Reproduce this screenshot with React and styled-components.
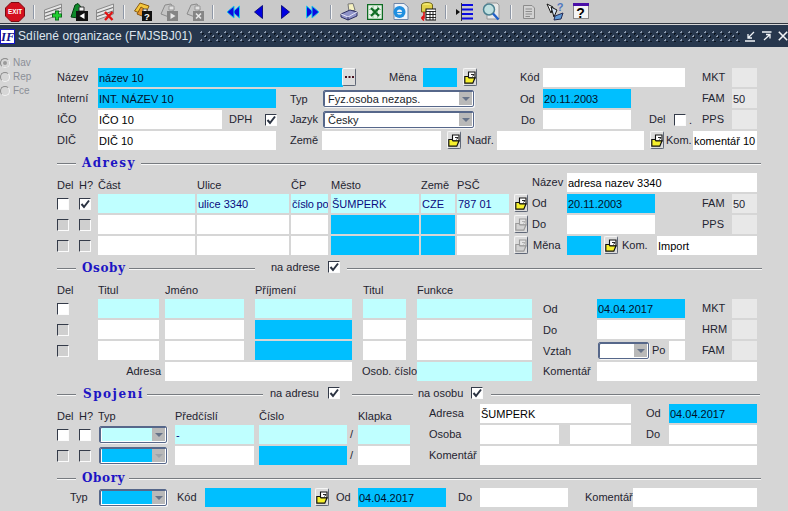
import React from 'react';
import styled, { createGlobalStyle } from 'styled-components';

const GlobalStyle = createGlobalStyle`
  html, body { margin: 0; padding: 0; background: #d6d6d6; overflow: hidden; }
  body { font-family: "Liberation Sans", Arial, sans-serif; font-size: 11px; color: #1a1e2a; }
`;

const Page = styled.div`
  width: 788px;
  height: 511px;
  display: flex;
  flex-direction: column;
  overflow: hidden;
`;

/* toolbar */
const Toolbar = styled.div`
  height: 23px;
  display: flex;
  align-items: center;
  background: #c9c9c9;
  border-bottom: 1px solid #30363f;
  flex-shrink: 0;
`;

const Tool = styled.span`
  display: flex;
  flex-shrink: 0;
  margin-left: ${p => p.$ml || 0}px;
`;

const Sep = styled.span`
  width: 1px;
  height: 14px;
  flex-shrink: 0;
  margin-left: ${p => p.$ml || 0}px;
  background: #8e97a6;
  border-right: 1px solid #f4f4f4;
`;

/* window title */
const TitleBar = styled.div`
  height: 22px;
  margin-top: 1px;
  display: flex;
  align-items: center;
  background: #27374d;
  flex-shrink: 0;
`;

const Logo = styled.span`
  width: 15px;
  height: 15px;
  box-sizing: border-box;
  flex-shrink: 0;
  background: #fff;
  border: 1px solid #1414c8;
  color: #12128c;
  font: italic bold 13px/13px "Liberation Serif", serif;
  text-align: center;
`;

const TitleText = styled.span`
  margin-left: 3px;
  width: 182px;
  flex-shrink: 0;
  color: #dde5ee;
  font-size: 12px;
  letter-spacing: 0.05px;
  white-space: nowrap;
`;

const Dots = styled.span`
  width: 540px;
  height: 11px;
  flex-shrink: 0;
  background-image:
    radial-gradient(circle at 1.5px 1.5px, #8f9db0 1px, transparent 1px),
    radial-gradient(circle at 2.5px 2.5px, #0d1520 1px, transparent 1px),
    radial-gradient(circle at 5.5px 5.5px, #8f9db0 1px, transparent 1px),
    radial-gradient(circle at 6.5px 6.5px, #0d1520 1px, transparent 1px);
  background-size: 8px 8px;
`;

const WindowBtn = styled.span`
  display: flex;
  flex-shrink: 0;
  margin-left: ${p => p.$ml || 0}px;
`;

/* canvas */
const Canvas = styled.div`
  flex: 1;
  display: flex;
`;

const Side = styled.div`
  width: 57px;
  flex-shrink: 0;
  padding-top: 9px;
  display: flex;
  flex-direction: column;
  gap: 1px;
`;

const RadioRow = styled.div`
  height: 13px;
  display: flex;
  align-items: center;
  gap: 3px;
  color: #8b8f96;
  font-size: 10px;
`;

const RadioDot = styled.span`
  width: 10px;
  height: 10px;
  box-sizing: border-box;
  border-radius: 50%;
  border: 1px solid;
  border-color: #8d8d8d #f2f2f2 #f2f2f2 #8d8d8d;
  background: ${p => (p.$on ? '#9a9a9a' : 'transparent')};
  box-shadow: ${p => (p.$on ? 'inset 0 0 0 2px #d6d6d6' : 'none')};
`;

const Main = styled.div`
  width: 705px;
  padding-top: 21px;
`;

const Row = styled.div`
  height: 19px;
  margin-bottom: 2px;
  display: flex;
`;

const Label = styled.span`
  flex-shrink: 0;
  width: ${p => p.$w}px;
  margin-left: ${p => p.$ml || 0}px;
  padding-right: ${p => p.$pr || 0}px;
  box-sizing: border-box;
  text-align: ${p => (p.$pr ? 'right' : 'left')};
  line-height: 13px;
  align-self: ${p => (p.$low ? 'flex-end' : 'center')};
  margin-top: ${p => (p.$dy ? p.$dy * 2 : 0)}px;
  color: #1f2430;
  white-space: nowrap;
`;

const fieldColors = {
  white: ['#ffffff', '#000000'],
  blue: ['#00bfff', '#00102a'],
  cyan: ['#bfffff', '#0a0a80'],
  ro: ['#e8e8e8', '#1f2430'],
};

const Field = styled.span`
  flex-shrink: 0;
  width: ${p => p.$w}px;
  margin-left: ${p => p.$ml || 0}px;
  box-sizing: border-box;
  padding: 1px 0 0 1px;
  overflow: hidden;
  line-height: 18px;
  letter-spacing: ${p => (p.$tight ? '-0.2px' : 'normal')};
  white-space: nowrap;
  background: ${p => fieldColors[p.$kind || 'white'][0]};
  color: ${p => fieldColors[p.$kind || 'white'][1]};
`;

const CheckBox = styled.span`
  flex-shrink: 0;
  width: 12px;
  height: 12px;
  box-sizing: border-box;
  margin-left: ${p => p.$ml || 0}px;
  align-self: center;
  display: flex;
  border: 1px solid;
  border-color: #343b49 #fbfbfb #fbfbfb #343b49;
  background: ${p => (p.$off ? '#cfcfcf' : '#ffffff')};
`;

const SelectBox = styled.span`
  flex-shrink: 0;
  width: ${p => p.$w}px;
  margin: 1px 0 1px ${p => p.$ml || 0}px;
  box-sizing: border-box;
  display: flex;
  border: 1px solid #56678a;
  border-radius: 2px;
  box-shadow: inset 1px 1px 0 #56678a, 1px 1px 0 #f6f6f6;
  padding: 1px 1px 1px 2px;
  background: #ffffff;
`;

const SelectValue = styled.span`
  flex: 1;
  min-width: 0;
  padding-left: 2px;
  overflow: hidden;
  line-height: 15px;
  white-space: nowrap;
  background: ${p => fieldColors[p.$kind || 'white'][0]};
`;

const SelectArrow = styled.span`
  width: 13px;
  flex-shrink: 0;
  display: flex;
  align-items: center;
  justify-content: center;
  background: #b9b9b9;
  &::after {
    content: '';
    border-left: 4px solid transparent;
    border-right: 4px solid transparent;
    border-top: 4px solid ${p => (p.$off ? '#9ea3aa' : '#667389')};
  }
`;

const IconButton = styled.span`
  flex-shrink: 0;
  width: 14px;
  height: 18px;
  box-sizing: border-box;
  margin-left: ${p => p.$ml || 0}px;
  align-self: flex-start;
  display: flex;
  align-items: center;
  justify-content: center;
  border: 1px solid;
  border-color: #f5f5f5 #5f6777 #5f6777 #f5f5f5;
  border-radius: 2px;
  background: #dcdcdc;
`;

const Divider = styled.div`
  height: 14px;
  margin: 6px 0 3px;
  display: flex;
  align-items: center;
`;

const Rule = styled.span`
  height: 1px;
  flex: ${p => (p.$w ? `0 0 ${p.$w}px` : 1)};
  margin-left: ${p => p.$ml || 0}px;
  margin-right: ${p => p.$mr || 0}px;
  background: #777b80;
  box-shadow: 0 1px 0 #f8f8f8;
`;

const SectionTitle = styled.span`
  width: ${p => p.$w}px;
  margin-left: ${p => p.$ml || 6}px;
  flex-shrink: 0;
  font: bold 12px/14px "DejaVu Serif", "Liberation Serif", serif;
  letter-spacing: ${p => p.$ls}px;
  color: #1d14c4;
  white-space: nowrap;
`;

const DividerOption = styled.span`
  flex-shrink: 0;
  display: flex;
  align-items: center;
  height: 13px;
  align-self: flex-start;
  margin: -1px 0 0 ${p => p.$ml || 0}px;
`;

const OptionText = styled.span`
  width: ${p => p.$w}px;
  color: #1f2430;
  white-space: nowrap;
`;

/* drawings */
const CheckMark = () => (
  <svg width="10" height="10" viewBox="0 0 10 10">
    <path d="M1.5 5 L4 8 L9 1.5" fill="none" stroke="#2b3342" strokeWidth="2" />
  </svg>
);

const Check = ({ on, off, ml }) => (
  <CheckBox $off={off} $ml={ml}>{on && <CheckMark />}</CheckBox>
);

const FolderIcon = ({ off }) => (
  <svg width="12" height="13" viewBox="0 0 12 13">
    <path d="M4.5 1 H11 V7 H4.5 Z" fill={off ? '#e4e4e4' : '#fff'} stroke={off ? '#9a9a9a' : '#111'} strokeWidth="1.1" />
    <path d="M7 3.5 H10 L8.5 5.5" fill="none" stroke={off ? '#aaa' : '#111'} strokeWidth="0.9" />
    <path d="M.8 5.5 H4 L5 6.8 H11 L8.8 12.2 H.8 Z" fill={off ? '#d2d2d2' : '#f6f02c'} stroke={off ? '#9a9a9a' : '#111'} strokeWidth="1.2" />
  </svg>
);

const Folder = ({ off, ml }) => (
  <IconButton $ml={ml}><FolderIcon off={off} /></IconButton>
);

const Select = ({ w, ml, kind, value, off }) => (
  <SelectBox $w={w} $ml={ml}>
    <SelectValue $kind={kind}>{value}</SelectValue>
    <SelectArrow $off={off} />
  </SelectBox>
);

const ExitIcon = () => (
  <svg width="20" height="20" viewBox="0 0 20 20">
    <path d="M6 .5 H14 L19.5 6 V14 L14 19.5 H6 L.5 14 V6 Z" fill="#d4101e" stroke="#7b0a12" />
    <text x="10" y="12.3" textAnchor="middle" fontFamily="Liberation Sans" fontWeight="bold" fontSize="6.4" fill="#fff">EXIT</text>
  </svg>
);

const TableBase = () => (
  <g>
    <path d="M.5 7 L17.5 1 V11 L.5 17 Z" fill="#e6e6e6" stroke="#8a8a8a" />
    <path d="M1 10 L17 4.5 M1 13.5 L17 8" stroke="#6f6f6f" strokeWidth="1.2" />
  </g>
);

const AddIcon = () => (
  <svg width="18" height="18" viewBox="0 0 18 18">
    <TableBase />
    <path d="M13 7.5 V17.5 M8 12.5 H18" stroke="#0c6a1c" strokeWidth="4" />
    <path d="M13 8.5 V16.5 M9 12.5 H17" stroke="#20d030" strokeWidth="2.4" />
  </svg>
);

const DelIcon = () => (
  <svg width="18" height="18" viewBox="0 0 18 18">
    <TableBase />
    <path d="M9 9 L16.5 17 M16.5 9 L9 17" stroke="#e01414" strokeWidth="2.4" />
  </svg>
);

const GreenDocIcon = () => (
  <svg width="18" height="18" viewBox="0 0 18 18">
    <path d="M1 14 L5 2 L8 .5 L11 4 L9 8 L8 15 Z" fill="#0e8a2a" stroke="#053d12" />
    <path d="M9 4 H14 V8 H9 Z" fill="#f0f0f0" stroke="#333" />
    <rect x="6" y="8" width="12" height="10" fill="#111" />
    <path d="M14.5 10 V16 L9.5 13 Z" fill="#fff" />
  </svg>
);

const QueryIcon = () => (
  <svg width="18" height="19" viewBox="0 0 18 19">
    <path d="M0.5 9 L6 1 L15 4 L11 13 Z" fill="#f3c63c" stroke="#8a5a10" />
    <path d="M3 12 L7 5 L10 7 L8 14 Z" fill="#e8932a" stroke="#8a5a10" />
    <path d="M9 7 H13 V10 H9 Z" fill="#eee" stroke="#555" />
    <rect x="8" y="9" width="10" height="10" fill="#111" />
    <text x="13" y="17.5" textAnchor="middle" fontFamily="Liberation Sans" fontWeight="bold" fontSize="9.5" fill="#fff">?</text>
  </svg>
);

const GreyPanelIcon = ({ mark }) => (
  <svg width="18" height="18" viewBox="0 0 18 18">
    <path d="M1 11 L5 2 L11 1 L14 6 L9 14 Z" fill="#c4c4c4" stroke="#8b8b8b" />
    <path d="M9 3 H14 V7 H9 Z" fill="#e2e2e2" stroke="#999" />
    <rect x="7" y="8" width="11" height="10" fill="#858585" />
    {mark === 'play'
      ? <path d="M10.5 10 V16 L15.5 13 Z" fill="#e8e8e8" />
      : <path d="M10 10.5 L15 15.5 M15 10.5 L10 15.5" stroke="#e8e8e8" strokeWidth="1.6" />}
  </svg>
);

const NavIcon = ({ dir, twin }) => (
  <svg width={twin ? 14 : 9} height="14" viewBox={twin ? '0 0 14 14' : '0 0 9 14'} style={{ transform: dir === 'right' ? 'scaleX(-1)' : 'none' }}>
    {twin && <path d="M13.5 1 V13 L6.5 7 Z" fill="#0a0ae0" stroke="#19c8e8" strokeWidth="1" />}
    {twin
      ? <path d="M8 1 V13 L1 7 Z" fill="#0a0ae0" stroke="#19c8e8" strokeWidth="1" />
      : <path d="M8.5 .5 V13.5 L.5 7 Z" fill="#0000e0" stroke="#00006a" strokeWidth=".8" />}
  </svg>
);

const PrinterIcon = () => (
  <svg width="18" height="18" viewBox="0 0 18 18">
    <path d="M8 1 L13 .5 L15 7 L9 9 Z" fill="#f6f2c0" stroke="#777" />
    <path d="M1 11 L10 7 L17 9 V13 L8 17 L1 14 Z" fill="#8f93c8" stroke="#2c2f63" />
    <path d="M1 11 L8 14 L17 9" fill="none" stroke="#e6e6f4" />
    <path d="M8 14 V17" stroke="#2c2f63" />
  </svg>
);

const ExcelIcon = () => (
  <svg width="16" height="16" viewBox="0 0 16 16">
    <rect x=".5" y=".5" width="15" height="15" fill="#e7f3e7" stroke="#0d6b22" strokeWidth="1.5" />
    <path d="M2 5.5 H14 M2 10.5 H14 M6 2 V14 M10.5 2 V14" stroke="#7fbb8c" strokeWidth=".8" />
    <path d="M4 4 L12 12 M12 4 L4 12" stroke="#0d6b22" strokeWidth="2" />
  </svg>
);

const WebDocIcon = () => (
  <svg width="17" height="17" viewBox="0 0 17 17">
    <path d="M2 .5 H12 L16 4 V16.5 H2 Z" fill="#eef4fb" stroke="#6f86a8" />
    <circle cx="7.5" cy="9" r="6" fill="#1f8fe0" />
    <circle cx="7.5" cy="9" r="2.6" fill="#eef4fb" />
    <path d="M4 9.5 H13" stroke="#1f8fe0" strokeWidth="1.2" />
  </svg>
);

const DbCalendarIcon = () => (
  <svg width="16" height="19" viewBox="0 0 16 19">
    <ellipse cx="7" cy="3" rx="5.5" ry="2.5" fill="#f2e86a" stroke="#70661a" />
    <path d="M1.5 3 V10 H12.5 V3" fill="#e2d24a" stroke="#70661a" />
    <rect x="6" y="7" width="10" height="11" fill="#fff" stroke="#111" />
    <path d="M6 9.5 H16 M6 12.5 H16 M6 15.5 H16 M10 9.5 V18 M13 9.5 V18" stroke="#111" strokeWidth=".9" />
    <path d="M4 10 V16 H1.5 M1.5 16 L4 13.5 M1.5 16 L4 18.5" fill="none" stroke="#e01414" strokeWidth="1.6" />
  </svg>
);

const ListIcon = () => (
  <svg width="17" height="18" viewBox="0 0 17 18">
    <path d="M0 6 L4 9 L0 12 Z" fill="#111" />
    <path d="M5.5 0 V18" stroke="#333" />
    <path d="M6 2 H17 M6 6.5 H17 M6 11 H17 M6 15.5 H17" stroke="#0a0ae0" strokeWidth="1.8" />
  </svg>
);

const SearchIcon = () => (
  <svg width="18" height="19" viewBox="0 0 18 19">
    <path d="M5 1 H15 L17 3 V17 H5 Z" fill="#e8e8e8" stroke="#9a9a9a" />
    <circle cx="7" cy="7.5" r="5.5" fill="#bfe0e0" stroke="#4a7f8f" strokeWidth="1.5" />
    <path d="M11 11.5 L16.5 17.5" stroke="#1f5fc8" strokeWidth="2.4" />
  </svg>
);

const PageIcon = () => (
  <svg width="12" height="14" viewBox="0 0 12 14">
    <path d="M.5 .5 H9 L11.5 3 V13.5 H.5 Z" fill="#d2d2d2" stroke="#8c8c8c" />
    <path d="M2.5 4 H9 M2.5 6.5 H9 M2.5 9 H9 M2.5 11.5 H7" stroke="#8c8c8c" />
  </svg>
);

const HelpArrowsIcon = () => (
  <svg width="19" height="19" viewBox="0 0 19 19">
    <path d="M1 2 L7 5 L5 11 Z" fill="#fff" stroke="#111" />
    <path d="M5 5 L11 8 L8 15 Z" fill="#cfe0f4" stroke="#111" />
    <path d="M9 14 L17 11 L15 17 L8 18 Z" fill="#5f9ad8" stroke="#222a55" />
    <text x="14" y="9" textAnchor="middle" fontFamily="Liberation Sans" fontWeight="bold" fontSize="11" fill="#4f78c0">?</text>
  </svg>
);

const HelpWindowIcon = () => (
  <svg width="16" height="17" viewBox="0 0 16 17">
    <rect x=".5" y=".5" width="15" height="15" fill="#f4f4f4" stroke="#8a8a8a" />
    <rect x="0" y="0" width="16" height="3" fill="#4a10a8" />
    <text x="7.5" y="15" textAnchor="middle" fontFamily="Liberation Sans" fontWeight="bold" fontSize="14" fill="#000">?</text>
  </svg>
);

const MinIcon = () => (
  <svg width="11" height="11" viewBox="0 0 11 11">
    <path d="M9 1 L3 7 M3 3 V7 H7 M0 10 H10" fill="none" stroke="#f0f3f6" strokeWidth="1.3" />
  </svg>
);

const MaxIcon = () => (
  <svg width="11" height="11" viewBox="0 0 11 11">
    <path d="M1 1 H10.5 M3 9 L9 3.5 M5 3.5 H9 V7.5" fill="none" stroke="#f0f3f6" strokeWidth="1.3" />
  </svg>
);

const CloseIcon = () => (
  <svg width="10" height="10" viewBox="0 0 10 10">
    <path d="M.8 .8 L9.2 9.2 M9.2 .8 L.8 9.2" stroke="#f0f3f6" strokeWidth="1.6" />
  </svg>
);

const Dots3 = () => (
  <svg width="9" height="3" viewBox="0 0 9 3">
    <path d="M0 0 H2 V2 H0 Z M3.5 0 H5.5 V2 H3.5 Z M7 0 H9 V2 H7 Z" fill="#4a1220" />
  </svg>
);

export default function App() {
  return (
    <Page>
      <GlobalStyle />
      <Toolbar>
        <Tool $ml={5}><ExitIcon /></Tool>
        <Sep $ml={8} />
        <Tool $ml={9}><AddIcon /></Tool>
        <Tool $ml={8}><GreenDocIcon /></Tool>
        <Tool $ml={8}><DelIcon /></Tool>
        <Sep $ml={9} />
        <Tool $ml={9}><QueryIcon /></Tool>
        <Tool $ml={8}><GreyPanelIcon mark="play" /></Tool>
        <Tool $ml={8}><GreyPanelIcon mark="x" /></Tool>
        <Sep $ml={8} />
        <Tool $ml={12}><NavIcon twin /></Tool>
        <Tool $ml={14}><NavIcon /></Tool>
        <Tool $ml={18}><NavIcon dir="right" /></Tool>
        <Tool $ml={16}><NavIcon dir="right" twin /></Tool>
        <Sep $ml={10} />
        <Tool $ml={8}><PrinterIcon /></Tool>
        <Tool $ml={9}><ExcelIcon /></Tool>
        <Tool $ml={9}><WebDocIcon /></Tool>
        <Tool $ml={11}><DbCalendarIcon /></Tool>
        <Sep $ml={9} />
        <Tool $ml={9}><ListIcon /></Tool>
        <Tool $ml={9}><SearchIcon /></Tool>
        <Sep $ml={10} />
        <Tool $ml={11}><PageIcon /></Tool>
        <Tool $ml={11}><HelpArrowsIcon /></Tool>
        <Tool $ml={8}><HelpWindowIcon /></Tool>
      </Toolbar>

      <TitleBar>
        <Logo>IF</Logo>
        <TitleText>Sdílené organizace (FMJSBJ01)</TitleText>
        <Dots />
        <WindowBtn $ml={5}><MinIcon /></WindowBtn>
        <WindowBtn $ml={5}><MaxIcon /></WindowBtn>
        <WindowBtn $ml={6}><CloseIcon /></WindowBtn>
      </TitleBar>

      <Canvas>
        <Side>
          <RadioRow><RadioDot $on />Nav</RadioRow>
          <RadioRow><RadioDot />Rep</RadioRow>
          <RadioRow><RadioDot />Fce</RadioRow>
        </Side>

        <Main>
          <Row>
            <Label $w={41}>Název</Label>
            <Field $w={245} $kind="blue">název 10</Field>
            <IconButton $ml={-1}><Dots3 /></IconButton>
            <Label $ml={33} $w={34}>Měna</Label>
            <Field $w={34} $kind="blue" />
            <Folder ml={6} />
            <Label $ml={43} $w={23}>Kód</Label>
            <Field $w={142} />
            <Label $ml={17} $w={30}>MKT</Label>
            <Field $w={25} $kind="ro" />
          </Row>
          <Row>
            <Label $w={41}>Interní</Label>
            <Field $w={178} $kind="blue">INT. NÁZEV 10</Field>
            <Label $ml={14} $w={33} $dy={1}>Typ</Label>
            <Select w={151} value="Fyz.osoba nezaps." />
            <Label $ml={46} $w={23} $dy={1}>Od</Label>
            <Field $w={88} $kind="blue">20.11.2003</Field>
            <Label $ml={71} $w={30}>FAM</Label>
            <Field $w={25} $kind="ro">50</Field>
          </Row>
          <Row>
            <Label $w={41}>IČO</Label>
            <Field $w={124}>IČO 10</Field>
            <Label $ml={7} $w={36}>DPH</Label>
            <Check on />
            <Label $ml={13} $w={33}>Jazyk</Label>
            <Select w={151} value="Česky" />
            <Label $ml={47} $w={22} $dy={1}>Do</Label>
            <Field $w={88} />
            <Label $ml={18} $w={25}>Del</Label>
            <Check />
            <Label $w={16} $dy={1}>&nbsp;.</Label>
            <Label $w={30}>PPS</Label>
            <Field $w={25} $kind="ro" />
          </Row>
          <Row>
            <Label $w={41}>DIČ</Label>
            <Field $w={178}>DIČ 10</Field>
            <Label $ml={14} $w={32}>Země</Label>
            <Field $w={119} />
            <Folder ml={6} />
            <Label $ml={6} $w={30}>Nadř.</Label>
            <Field $w={147} />
            <Folder ml={6} />
            <Label $ml={2} $w={27}>Kom.</Label>
            <Field $w={64}>komentář 10</Field>
          </Row>

          <Divider>
            <Rule $w={19} />
            <SectionTitle $w={54} $ls={1.4}>Adresy</SectionTitle>
            <Rule $ml={5} $mr={1} />
          </Divider>
          <Row>
            <Label $w={22} $low>Del</Label>
            <Label $w={19} $low>H?</Label>
            <Label $w={99} $low>Část</Label>
            <Label $w={94} $low>Ulice</Label>
            <Label $w={40} $low>ČP</Label>
            <Label $w={90} $low>Město</Label>
            <Label $w={36} $low>Země</Label>
            <Label $w={75} $low>PSČ</Label>
            <Label $w={35}>Název</Label>
            <Field $w={190}>adresa nazev 3340</Field>
          </Row>
          <Row>
            <Check />
            <Check on ml={10} />
            <Field $ml={7} $w={97} $kind="cyan" />
            <Field $ml={2} $w={92} $kind="cyan">ulice 3340</Field>
            <Field $ml={2} $w={37} $kind="cyan" $tight>číslo po</Field>
            <Field $ml={3} $w={88} $kind="cyan">ŠUMPERK</Field>
            <Field $ml={2} $w={34} $kind="cyan">CZE</Field>
            <Field $ml={2} $w={52} $kind="cyan">787 01</Field>
            <Folder ml={5} />
            <Label $ml={4} $w={35}>Od</Label>
            <Field $w={88} $kind="blue">20.11.2003</Field>
            <Label $ml={47} $w={30}>FAM</Label>
            <Field $w={25} $kind="ro">50</Field>
          </Row>
          <Row>
            <Check off />
            <Check off ml={10} />
            <Field $ml={7} $w={97} />
            <Field $ml={2} $w={92} />
            <Field $ml={2} $w={37} />
            <Field $ml={3} $w={88} $kind="blue" />
            <Field $ml={2} $w={34} $kind="blue" />
            <Field $ml={2} $w={52} />
            <Folder off ml={5} />
            <Label $ml={4} $w={35}>Do</Label>
            <Field $w={88} />
            <Label $ml={47} $w={30}>PPS</Label>
            <Field $w={25} $kind="ro" />
          </Row>
          <Row>
            <Check off />
            <Check off ml={10} />
            <Field $ml={7} $w={97} />
            <Field $ml={2} $w={92} />
            <Field $ml={2} $w={37} />
            <Field $ml={3} $w={88} $kind="blue" />
            <Field $ml={2} $w={34} $kind="blue" />
            <Field $ml={2} $w={52} />
            <Folder off ml={5} />
            <Label $ml={5} $w={34}>Měna</Label>
            <Field $w={34} $kind="blue" />
            <Folder ml={3} />
            <Label $ml={4} $w={35}>Kom.</Label>
            <Field $w={100}>Import</Field>
          </Row>

          <Divider>
            <Rule $w={19} />
            <SectionTitle $w={45} $ls={0.6}>Osoby</SectionTitle>
            <Rule $ml={2} $w={126} />
            <DividerOption $ml={16}><OptionText $w={57}>na adrese</OptionText><Check on /></DividerOption>
            <Rule $ml={7} />
          </Divider>
          <Row>
            <Label $w={41} $low>Del</Label>
            <Label $w={67} $low>Titul</Label>
            <Label $w={90} $low>Jméno</Label>
            <Label $w={108} $low>Příjmení</Label>
            <Label $w={54} $low>Titul</Label>
            <Label $w={60} $low>Funkce</Label>
          </Row>
          <Row>
            <Check />
            <Field $ml={29} $w={61} $kind="cyan" />
            <Field $ml={6} $w={79} $kind="cyan" />
            <Field $ml={11} $w={97} $kind="cyan" />
            <Field $ml={11} $w={43} $kind="cyan" />
            <Field $ml={11} $w={115} $kind="cyan" />
            <Label $ml={11} $w={54} $dy={1}>Od</Label>
            <Field $w={88} $kind="blue">04.04.2017</Field>
            <Label $ml={17} $w={30}>MKT</Label>
            <Field $w={25} $kind="ro" />
          </Row>
          <Row>
            <Check off />
            <Field $ml={29} $w={61} />
            <Field $ml={6} $w={79} />
            <Field $ml={11} $w={97} $kind="blue" />
            <Field $ml={11} $w={43} />
            <Field $ml={11} $w={115} />
            <Label $ml={11} $w={54} $dy={1}>Do</Label>
            <Field $w={88} />
            <Label $ml={17} $w={30}>HRM</Label>
            <Field $w={25} $kind="ro" />
          </Row>
          <Row>
            <Check off />
            <Field $ml={29} $w={61} />
            <Field $ml={6} $w={79} />
            <Field $ml={11} $w={97} $kind="blue" />
            <Field $ml={11} $w={43} />
            <Field $ml={11} $w={115} />
            <Label $ml={11} $w={55} $dy={1}>Vztah</Label>
            <Select w={51} />
            <Label $ml={3} $w={17}>Po</Label>
            <Field $w={16} />
            <Label $ml={17} $w={30}>FAM</Label>
            <Field $w={25} $kind="ro" />
          </Row>
          <Row>
            <Label $w={108} $pr={4}>Adresa</Label>
            <Field $w={187} />
            <Label $ml={10} $w={55}>Osob. číslo</Label>
            <Field $w={115} $kind="cyan" />
            <Label $ml={11} $w={54}>Komentář</Label>
            <Field $w={160} />
          </Row>

          <Divider>
            <Rule $w={19} />
            <SectionTitle $ml={7} $w={61} $ls={1.5}>Spojení</SectionTitle>
            <Rule $ml={3} $w={116} />
            <DividerOption $ml={7}><OptionText $w={58}>na adresu</OptionText><Check on /></DividerOption>
            <Rule $ml={12} $w={61} />
            <DividerOption $ml={5}><OptionText $w={53}>na osobu</OptionText><Check on /></DividerOption>
            <Rule $ml={8} $mr={2} />
          </Divider>
          <Row>
            <Label $w={22} $low>Del</Label>
            <Label $w={19} $low>H?</Label>
            <Label $w={77} $low>Typ</Label>
            <Label $w={84} $low>Předčíslí</Label>
            <Label $w={99} $low>Číslo</Label>
            <Label $w={71} $low>Klapka</Label>
            <Label $w={51}>Adresa</Label>
            <Field $w={151}>ŠUMPERK</Field>
            <Label $ml={15} $w={23}>Od</Label>
            <Field $w={88} $kind="blue">04.04.2017</Field>
          </Row>
          <Row>
            <Check />
            <Check ml={10} />
            <Select ml={8} w={68} kind="cyan" />
            <Field $ml={8} $w={79} $kind="cyan">-</Field>
            <Field $ml={5} $w={88} $kind="cyan" />
            <Label $ml={3} $w={8}>/</Label>
            <Field $w={52} $kind="cyan" />
            <Label $ml={19} $w={51}>Osoba</Label>
            <Field $w={79} />
            <Field $ml={11} $w={61} />
            <Label $ml={15} $w={23}>Do</Label>
            <Field $w={88} />
          </Row>
          <Row>
            <Check off />
            <Check off ml={10} />
            <Select ml={8} w={68} kind="blue" off />
            <Field $ml={8} $w={79} />
            <Field $ml={5} $w={88} $kind="blue" />
            <Label $ml={3} $w={8}>/</Label>
            <Field $w={52} />
            <Label $ml={19} $w={51}>Komentář</Label>
            <Field $w={277} />
          </Row>

          <Divider>
            <Rule $w={19} />
            <SectionTitle $w={45} $ls={0.6}>Obory</SectionTitle>
            <Rule $ml={2} $mr={1} />
          </Divider>
          <Row>
            <Label $ml={13} $w={29}>Typ</Label>
            <Select w={68} kind="blue" />
            <Label $ml={10} $w={28}>Kód</Label>
            <Field $w={106} $kind="blue" />
            <Folder ml={4} />
            <Label $ml={7} $w={22}>Od</Label>
            <Field $w={88} $kind="blue">04.04.2017</Field>
            <Label $ml={12} $w={22}>Do</Label>
            <Field $w={88} />
            <Label $ml={17} $w={48}>Komentář</Label>
            <Field $w={124} />
          </Row>
        </Main>
      </Canvas>
    </Page>
  );
}
